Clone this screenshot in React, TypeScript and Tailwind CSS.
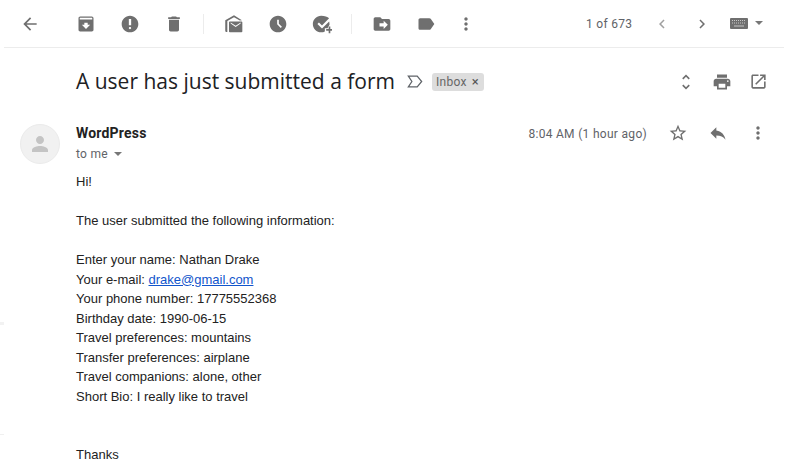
const Icon = ({ d, size = 20, className = "" }: { d: string; size?: number; className?: string }) => (
  <svg width={size} height={size} viewBox="0 0 24 24" fill="currentColor" className={className}>
    <path d={d} />
  </svg>
);

const icons = {
  back: "M20 11H7.83l5.59-5.59L12 4l-8 8 8 8 1.41-1.41L7.83 13H20v-2z",
  archive: "M19 3H5c-1.1 0-2 .9-2 2v14c0 1.1.9 2 2 2h14c1.1 0 2-.9 2-2V5c0-1.1-.9-2-2-2zM4.500 6.500V5c0-.3.2-.5.5-.5h14c.3 0 .5.2.5.5v1.500h-15zM12 18l-5-5h3v-2.500h4V13h3l-5 5z",
  report: "M12 2C6.48 2 2 6.48 2 12s4.48 10 10 10 10-4.48 10-10S17.52 2 12 2zm0 16.300c-.8 0-1.400-.6-1.400-1.400s.6-1.400 1.400-1.400 1.400.6 1.400 1.400-.6 1.400-1.400 1.400zm1.400-4.800h-2.800V6h2.800v7.500z",
  trash: "M6 19c0 1.100.9 2 2 2h8c1.100 0 2-.9 2-2V7H6v12zM19 4h-3.500l-1-1h-5l-1 1H5v2h14V4z",
  clock: "M11.99 2C6.47 2 2 6.48 2 12s4.47 10 9.99 10C17.52 22 22 17.52 22 12S17.52 2 11.99 2zm3.3 14.71L11 12.41V7h2v4.59l3.71 3.71-1.42 1.41z",
  move: "M20 6h-8l-2-2H4c-1.100 0-2 .9-2 2v12c0 1.100.9 2 2 2h16c1.100 0 2-.9 2-2V8c0-1.100-.9-2-2-2zm-6 12v-3h-5v-4h5V8l5 5-5 5z",
  label: "M17.63 5.84C17.27 5.33 16.67 5 16 5L5 5.01C3.9 5.01 3 5.9 3 7v10c0 1.100.9 1.990 2 1.990L16 19c.67 0 1.270-.33 1.630-.84L22 12l-4.370-6.160z",
  more: "M12 8c1.100 0 2-.9 2-2s-.9-2-2-2-2 .9-2 2 .9 2 2 2zm0 2c-1.100 0-2 .9-2 2s.9 2 2 2 2-.9 2-2-.9-2-2-2zm0 6c-1.100 0-2 .9-2 2s.9 2 2 2 2-.9 2-2-.9-2-2-2z",
  unfold: "M12 5.830L15.170 9l1.410-1.410L12 3 7.410 7.590 8.830 9 12 5.830zm0 12.340L8.830 15l-1.410 1.410L12 21l4.590-4.590L15.170 15 12 18.170z",
  print: "M19 8H5c-1.660 0-3 1.340-3 3v6h4v4h12v-4h4v-6c0-1.660-1.340-3-3-3zm-3 11H8v-5h8v5zm3-7c-.55 0-1-.45-1-1s.45-1 1-1 1 .45 1 1-.45 1-1 1zm-1-9H6v4h12V3z",
  open: "M19 19H5V5h7V3H5c-1.110 0-2 .9-2 2v14c0 1.100.89 2 2 2h14c1.100 0 2-.9 2-2v-7h-2v7zM14 3v2h3.590l-9.830 9.830 1.410 1.410L19 6.410V10h2V3h-7z",
  star: "M22 9.240l-7.190-.62L12 2 9.190 8.630 2 9.240l5.460 4.730L5.820 21 12 17.270 18.180 21l-1.630-7.030L22 9.240zM12 15.400l-3.760 2.270 1-4.280-3.320-2.880 4.380-.38L12 6.100l1.710 4.040 4.380.38-3.320 2.880 1 4.280L12 15.400z",
  reply: "M10 9V5l-7 7 7 7v-4.100c5 0 8.500 1.600 11 5.100-1-5-4-10-11-11z",
  person: "M12 12c2.210 0 4-1.790 4-4s-1.790-4-4-4-4 1.790-4 4 1.790 4 4 4zm0 2c-2.670 0-8 1.340-8 4v2h16v-2c0-2.660-5.330-4-8-4z",
  chevL: "M15.410 7.410L14 6l-6 6 6 6 1.410-1.410L10.830 12z",
  chevR: "M10 6L8.590 7.410 13.170 12l-4.580 4.590L10 18l6-6z",
};

function ToolBtn({ d }: { d: string }) {
  return (
    <div className="w-11 flex justify-center text-[#6f6f6f]">
      <Icon d={d} />
    </div>
  );
}

const Divider = () => <div className="w-px h-5 bg-[#ececec]" />;

const lines = [
  "Enter your name: Nathan Drake",
  null,
  "Your phone number: 17775552368",
  "Birthday date: 1990-06-15",
  "Travel preferences: mountains",
  "Transfer preferences: airplane",
  "Travel companions: alone, other",
  "Short Bio: I really like to travel",
];

export default function App() {
  return (
    <div className="relative w-[788px] h-[474px] overflow-hidden bg-white font-['Liberation_Sans',Arial,sans-serif] text-[#222]">
      <div className="absolute left-0 top-[322px] w-1 h-[3px] bg-[#f2f2f2]" />
      <div className="absolute left-0 top-[434px] w-1 h-px bg-[#f0f0f0]" />

      <div className="mx-1 h-[48px] border-b border-[#ececec] flex items-center pl-[4px]">
        <ToolBtn d={icons.back} />
        <div className="w-[12px]" />
        <ToolBtn d={icons.archive} />
        <ToolBtn d={icons.report} />
        <ToolBtn d={icons.trash} />
        <div className="w-[7px]" />
        <Divider />
        <div className="w-[8px]" />
        <div className="w-11 flex justify-center text-[#6f6f6f]">
          <svg width="20" height="20" viewBox="0 0 24 24" fill="currentColor">
            <path d="M12 1.500L1.500 7.500V20c0 1 .8 1.500 1.500 1.500h1V8.500l8-4.500 7 3.700 2.500-.2L12 1.500z" />
            <path d="M6 10c0-.6.4-1 1-1h14c.6 0 1 .4 1 1v11c0 .6-.4 1-1 1H7c-.6 0-1-.4-1-1V10zm2 1.500l6 4 6-4v-1.300l-6 3.800-6-3.800v1.300z" />
          </svg>
        </div>
        <ToolBtn d={icons.clock} />
        <div className="w-11 flex justify-center text-[#6f6f6f]">
          <svg width="20" height="20" viewBox="0 0 24 24" fill="currentColor">
            <path d="M11 2C5.500 2 1 6.500 1 12s4.500 10 10 10c1.600 0 3-.4 4.400-1.100V17h3.200l2.400-4.200V12c0-1-.2-2-.4-2.900L12 17.500 6.500 12l1.800-1.800 3.700 3.700 8.500-8.700C18.700 3.400 15.200 2 11 2z" />
            <path d="M20 15h2v3h3v2h-3v3h-2v-3h-3v-2h3z" />
          </svg>
        </div>
        <div className="w-[7px]" />
        <Divider />
        <div className="w-[8px]" />
        <ToolBtn d={icons.move} />
        <ToolBtn d={icons.label} />
        <div className="w-9 flex justify-center text-[#6f6f6f]">
          <Icon d={icons.more} />
        </div>
        <span className="ml-[102px] w-[46px] text-[12px] tracking-[0.3px] font-['Roboto',sans-serif] text-[#5f6368] whitespace-nowrap">1 of 673</span>
        <div className="ml-[10px] w-10 flex justify-center text-[#a0a0a0]"><Icon d={icons.chevL} size={18} /></div>
        <div className="w-10 flex justify-center text-[#6f6f6f]"><Icon d={icons.chevR} size={18} /></div>
        <div className="ml-[8px] flex items-center gap-[7px]">
          <svg width="18" height="11" viewBox="0 0 18 11">
            <rect width="18" height="11" rx="1" fill="#6f6f6f" />
            <path d="M2 2.500h14M2 5h14" stroke="#c8c8c8" strokeWidth="1" strokeDasharray="1 1" />
            <path d="M4 8h10" stroke="#c8c8c8" strokeWidth="1" />
          </svg>
          <div className="w-0 h-0 border-x-[4px] border-x-transparent border-t-[4px] border-t-[#777] mb-[2px]" />
        </div>
      </div>

      <div className="flex items-center pl-[76px] h-[68px] mb-[7px] pb-[1px]">
        <h1 className="mb-[2px] text-[21px] leading-7 font-normal text-[#202124] font-['Open_Sans',sans-serif] whitespace-nowrap">A user has just submitted a form</h1>
        <svg width="16" height="13" viewBox="0 0 18 14" fill="none" stroke="#5f6368" strokeWidth="1.400" className="ml-[12px]">
          <path d="M1.500 1h10l5 6-5 6h-10l4-6z" />
        </svg>
        <span className="ml-[9px] h-[18px] rounded-[3px] bg-[#dddddd] pl-[4px] pr-[5px] flex items-center text-[12px] tracking-[0.3px] text-[#666] font-['Roboto',sans-serif]">
          Inbox<span className="ml-[5px] text-[#555] text-[13px] leading-none">×</span>
        </span>
        <div className="ml-auto flex items-center text-[#6f6f6f] pr-[12px]">
          <div className="w-9 flex justify-center"><Icon d={icons.unfold} /></div>
          <div className="w-9 flex justify-center"><Icon d={icons.print} /></div>
          <div className="w-9 flex justify-center"><Icon d={icons.open} size={19} /></div>
        </div>
      </div>

      <div className="flex pl-[20px]">
        <div className="w-10 h-10 mt-[1px] rounded-full bg-[#f1f1f1] border border-[#ebebeb] flex items-center justify-center text-[#c4c4c4]">
          <Icon d={icons.person} size={24} />
        </div>
        <div className="ml-[16px] flex-1">
          <div className="flex">
            <div>
              <div className="text-[14px] leading-5 font-bold tracking-[0.2px] text-[#222] font-['Roboto',sans-serif]">WordPress</div>
              <div className="mt-[1px] flex items-center text-[12px] tracking-[0.3px] leading-5 text-[#5f6368] font-['Roboto',sans-serif]">
                to me
                <div className="ml-[6px] w-0 h-0 border-x-[4px] border-x-transparent border-t-[4px] border-t-[#777]" />
              </div>
            </div>
            <div className="ml-auto flex items-start pr-[10px] text-[#6f6f6f]">
              <span className="mt-[1px] text-[12px] tracking-[0.3px] leading-5 text-[#5f6368] font-['Roboto',sans-serif] mr-[11px] whitespace-nowrap">8:04 AM (1 hour ago)</span>
              <div className="w-10 flex justify-center"><Icon d={icons.star} /></div>
              <div className="w-10 flex justify-center"><Icon d={icons.reply} /></div>
              <div className="w-10 flex justify-center"><Icon d={icons.more} /></div>
            </div>
          </div>
          <div className="mt-[8px] text-[13px] leading-[19.5px] text-[#222]">
            <p>Hi!</p>
            <p className="mt-[19.5px]">The user submitted the following information:</p>
            <div className="mt-[19.5px]">
              {lines.map((l, i) =>
                l ? (
                  <p key={i}>{l}</p>
                ) : (
                  <p key={i}>
                    Your e-mail: <a className="text-[#1155cc] underline">drake@gmail.com</a>
                  </p>
                )
              )}
            </div>
            <p className="mt-[39px]">Thanks</p>
          </div>
        </div>
      </div>
    </div>
  );
}
